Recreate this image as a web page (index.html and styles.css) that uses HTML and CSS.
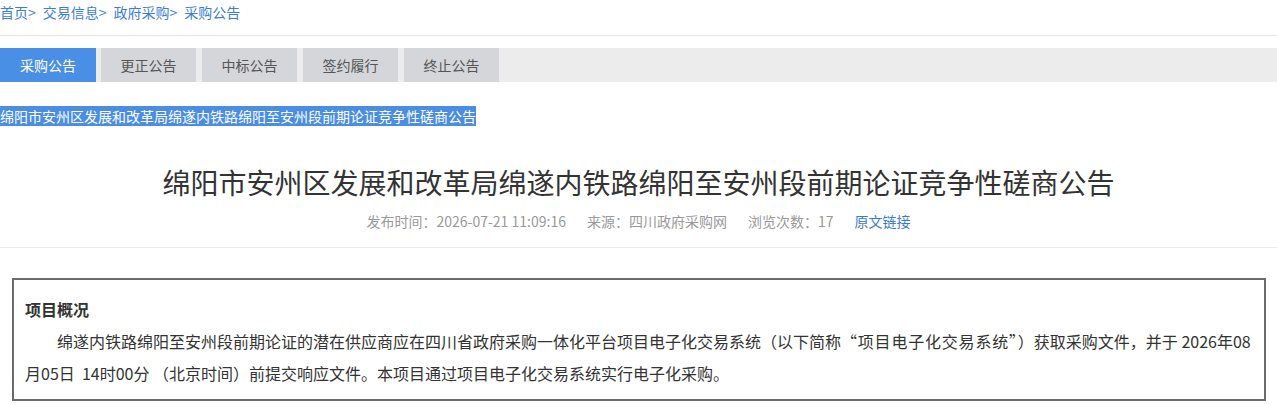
FILE: index.html
```html
<!DOCTYPE html>
<html lang="zh-CN">
<head>
<meta charset="utf-8">
<title>采购公告</title>
<link rel="stylesheet" href="styles.css">
</head>
<body>
  <nav class="crumbs">
    <a href="#">首页</a><span class="sep">&gt;</span><a href="#">交易信息</a><span class="sep">&gt;</span><a href="#">政府采购</a><span class="sep">&gt;</span><a href="#">采购公告</a>
  </nav>

  <div class="tabs">
    <a class="tab tab-active" href="#">采购公告</a>
    <a class="tab" href="#">更正公告</a>
    <a class="tab" href="#">中标公告</a>
    <a class="tab" href="#">签约履行</a>
    <a class="tab" href="#">终止公告</a>
  </div>

  <p class="picked"><span class="picked-text">绵阳市安州区发展和改革局绵遂内铁路绵阳至安州段前期论证竞争性磋商公告</span></p>

  <h1 class="title">绵阳市安州区发展和改革局绵遂内铁路绵阳至安州段前期论证竞争性磋商公告</h1>

  <div class="meta">
    <span>发布时间：2026-07-21 11:09:16</span>
    <span>来源：四川政府采购网</span>
    <span>浏览次数：17</span>
    <a class="meta-link" href="#">原文链接</a>
  </div>

  <hr class="rule">

  <section class="summary">
    <h2 class="summary-head">项目概况</h2>
    <p class="summary-body">绵遂内铁路绵阳至安州段前期论证的潜在供应商应在四川省政府采购一体化平台项目电子化交易系统（以下简称<span class="q">“项目电子化交易系统”</span>）获取采购文件，并于 2026年08月05日&nbsp;&nbsp;14时00分 （北京时间）前提交响应文件。本项目通过项目电子化交易系统实行电子化采购。</p>
  </section>
</body>
</html>
```

FILE: styles.css
```css
body {
  margin: 0;
  background: #fff;
  color: #333;
  font-family: "Noto Sans CJK SC", "Noto Sans", sans-serif;
}

a {
  text-decoration: none;
}

/* breadcrumb */
.crumbs {
  height: 35px;
  line-height: 25px;
  font-size: 14px;
  color: #3b7dd8;
  border-bottom: 1px solid #e6e6e6;
}

.crumbs a {
  color: #3b7dd8;
}

.sep {
  margin-right: 7px;
}

/* category tabs */
.tabs {
  display: flex;
  gap: 6px;
  margin-top: 12px;
  height: 34px;
  background: #ececec;
}

.tab {
  width: 95px;
  line-height: 34px;
  text-align: center;
  font-size: 14px;
  color: #555;
  background: #d4d6da;
}

.tab-active {
  width: 96px;
  margin-right: -1px;
  color: #fff;
  background: #4a8fe6;
}

/* selected copy of the heading */
.picked {
  margin: 25px 0 0;
  font-size: 14px;
  line-height: 18px;
}

.picked-text {
  color: #fff;
  background: #4a8de3;
}

/* article heading */
.title {
  margin: 37px 0 0;
  text-align: center;
  font-size: 28px;
  font-weight: normal;
  line-height: 40px;
  color: #333;
}

.meta {
  display: flex;
  justify-content: center;
  gap: 21px;
  margin-top: 9px;
  font-size: 14px;
  line-height: 20px;
  color: #999;
}

.meta-link {
  color: #3a7cd0;
}

.rule {
  margin: 16px 0 0;
  border: 0;
  border-top: 1px solid #ececec;
}

/* project summary box */
.summary {
  margin: 30px 11px 0 12px;
  padding: 13px 11px 10px;
  border: 2px solid #6b6b6b;
  font-size: 16px;
  line-height: 32px;
  color: #333;
}

.summary-head {
  margin: 0;
  font-size: 16px;
  font-weight: bold;
  line-height: 32px;
}

.summary-body {
  margin: 0;
  text-indent: 2em;
}

/* quoted system name, set a little looser */
.q {
  letter-spacing: 0.8px;
}
```
